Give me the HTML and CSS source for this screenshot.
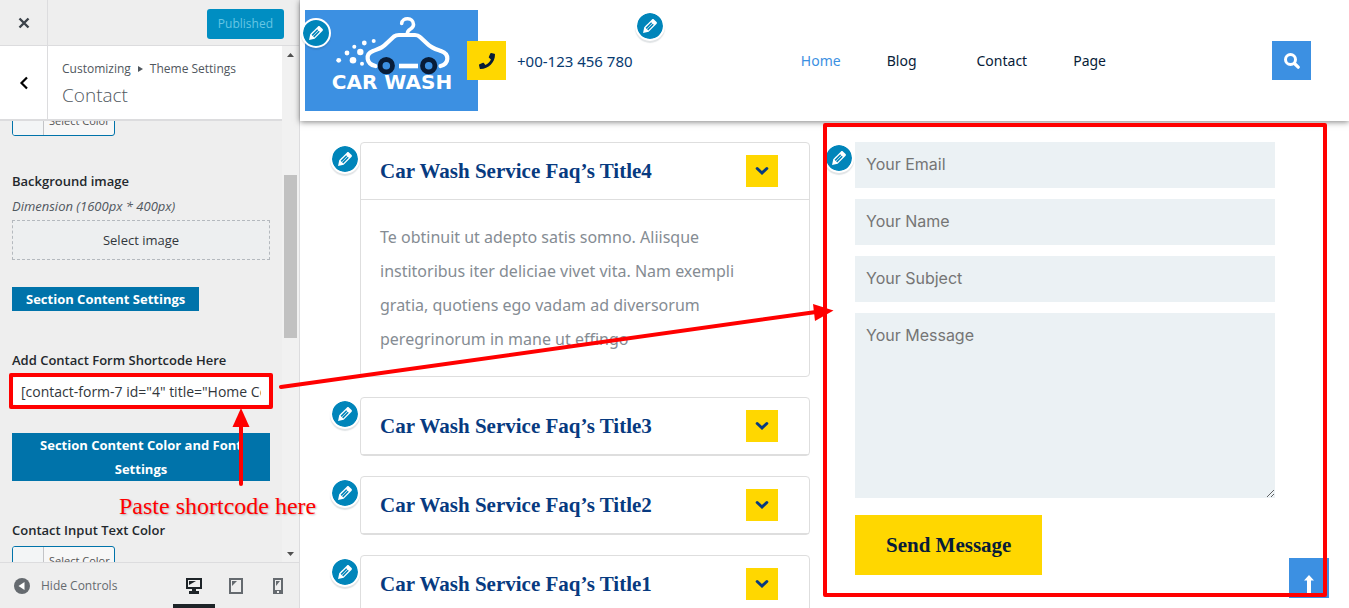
FILE: index.html
```html
<!DOCTYPE html>
<html lang="en">
<head>
<meta charset="utf-8">
<meta name="viewport" content="width=device-width, initial-scale=1">
<title>Customizing Theme Settings - Contact</title>
<link rel="stylesheet" href="styles.css">
</head>
<body>
<svg class="sprite" aria-hidden="true">
  <symbol id="pencil" viewBox="0 0 20 20"><path d="M13.89 3.39l2.71 2.72c.46.46.42 1.24.03 1.64l-8.01 8.02-5.56 1.16 1.16-5.58s7.6-7.63 7.99-8.03c.39-.39 1.22-.39 1.68.07zm-2.73 2.79l-5.59 5.61 1.11 1.11 5.54-5.65zm-2.97 8.23l5.58-5.6-1.07-1.08-5.59 5.6z" fill="#fff"/></symbol>
  <symbol id="chevron" viewBox="0 0 14 10"><path d="M2.200 2.500l4.800 4.500 4.800-4.500" fill="none" stroke="#073a80" stroke-width="3" stroke-linecap="round" stroke-linejoin="miter"/></symbol>
</svg>
<div class="app">
  <aside class="sidebar">
    <header class="topbar">
      <button class="close" aria-label="Close"><svg width="12" height="12" viewBox="0 0 12 12"><path d="M1.500 1.500l9 9M10.500 1.500l-9 9" stroke="#3c434a" stroke-width="2.400"/></svg></button>
      <button class="publish">Published</button>
    </header>
    <div class="panel">
      <div class="panel-content">
        <div class="section-title">
          <button class="back" aria-label="Back"><svg width="10" height="14" viewBox="0 0 10 14"><path d="M8 1.500L2.500 7 8 12.500" fill="none" stroke="#000" stroke-width="2.200"/></svg></button>
          <div class="crumbs">
            <div class="trail">Customizing <svg width="5" height="6" viewBox="0 0 5 6"><path d="M0 0l5 3-5 3z" fill="#50575e"/></svg> Theme Settings</div>
            <h3>Contact</h3>
          </div>
        </div>
        <div class="controls">
          <button class="color-button"><span class="swatch"></span><span class="color-label">Select Color</span></button>
          <section class="control image-control">
            <h4>Background image</h4>
            <p class="hint">Dimension (1600px * 400px)</p>
            <button class="select-image">Select image</button>
          </section>
          <div class="group-label compact">Section Content Settings</div>
          <section class="control shortcode-control">
            <label for="shortcode">Add Contact Form Shortcode Here</label>
            <div class="shortcode-frame"><input id="shortcode" type="text" value="[contact-form-7 id=&quot;4&quot; title=&quot;Home Contact&quot;]"></div>
          </section>
          <div class="group-label">Section Content Color and Font Settings</div>
          <section class="control color-control">
            <h4>Contact Input Text Color</h4>
            <button class="color-button"><span class="swatch"></span><span class="color-label">Select Color</span></button>
          </section>
        </div>
      </div>
      <div class="scrollbar" aria-hidden="true">
        <span class="arrow"><svg width="7" height="4" viewBox="0 0 7 4"><path d="M0 4l3.500-4L7 4z" fill="#505050"/></svg></span>
        <span class="track"><span class="thumb"></span></span>
        <span class="arrow"><svg width="7" height="4" viewBox="0 0 7 4"><path d="M0 0l3.500 4L7 0z" fill="#505050"/></svg></span>
      </div>
    </div>
    <footer class="bottombar">
      <button class="collapse"><svg width="16" height="16" viewBox="0 0 16 16"><circle cx="8" cy="8" r="8" fill="#656a6f"/><path d="M10.500 4v8L4.500 8z" fill="#fff"/></svg>Hide Controls</button>
      <div class="devices">
        <button class="device active" aria-label="Desktop"><svg width="16" height="16" viewBox="0 0 16 16"><path fill-rule="evenodd" d="M0 0h16v11h-6v2h3v3H3v-3h3v-2H0zM2 2v7h12V2z" fill="#1d2327"/><path d="M3 3h7L3 7z" fill="#1d2327"/></svg></button>
        <button class="device" aria-label="Tablet"><svg width="16" height="16" viewBox="0 0 16 16"><path fill-rule="evenodd" d="M1 0h14v16H1zM3 2v12h10V2z" fill="#656a6f"/><path d="M4 3h5L4 8z" fill="#656a6f"/></svg></button>
        <button class="device" aria-label="Mobile"><svg width="16" height="16" viewBox="0 0 16 16"><path fill-rule="evenodd" d="M3 0h10v16H3zM5 2v10h6V2zM7 13v2h2v-2z" fill="#656a6f"/><path d="M6 3h4L6 8z" fill="#656a6f"/></svg></button>
      </div>
    </footer>
  </aside>

  <main class="preview">
    <header class="site-header">
      <div class="logo-wrap">
        <svg class="logo" width="173" height="101" viewBox="0 0 173 101" role="img" aria-label="Car Wash">
          <rect width="173" height="101" fill="#3c90e2"/>
          <g fill="none" stroke="#fff" stroke-width="4.200" stroke-linecap="round" stroke-linejoin="round">
            <path d="M96.700 13.500C97 7 108.500 7 108.500 14.500C108.500 20 102.300 18 102.300 24" stroke-width="3.600"/>
            <path d="M70.500 56C61 54 60 44 68 41C76 38 77 38 82 33L89 26.500Q91 25 94 25H110Q113 25 115 27L122 33.500C127 38.500 130 39 136 41C145 44 144 54 135.500 56"/>
            <path d="M94 56h19" stroke-linecap="butt" stroke-width="4.600"/>
          </g>
          <g fill="none" stroke="#081c38" stroke-width="4.800"><circle cx="81.300" cy="55.700" r="6.200"/><circle cx="123.700" cy="55.700" r="6.200"/></g>
          <g fill="#fff"><circle cx="68.700" cy="31" r="2"/><circle cx="59.300" cy="33" r="2.400"/><circle cx="49.300" cy="36.700" r="2"/><circle cx="55.300" cy="42" r="3.200"/><circle cx="42" cy="43" r="2.400"/><circle cx="48" cy="50.300" r="3.300"/><circle cx="33.700" cy="50.300" r="2.400"/><circle cx="57" cy="53.700" r="2"/></g>
          <text class="logo-text" x="87" y="79" text-anchor="middle">CAR WASH</text>
        </svg>
        <button class="edit edit-logo" aria-label="Edit logo"><svg><use href="#pencil"/></svg></button>
      </div>
      <div class="phone">
        <span class="phone-icon"><svg width="16" height="16" viewBox="0 0 512 512"><path d="M493.400 24.600l-104-24c-11.300-2.600-22.900 3.300-27.500 13.900l-48 112c-4.200 9.800-1.400 21.300 6.900 28l60.600 49.600c-36 76.700-98.900 140.500-177.200 177.200l-49.600-60.600c-6.800-8.300-18.200-11.100-28-6.900l-112 48C3.900 366.500-2 378.100.6 389.400l24 104C27.100 504.200 36.700 512 48 512c256.100 0 464-207.500 464-464 0-11.200-7.700-20.900-18.600-23.400z" fill="#081c38"/></svg></span>
        <span>+00-123 456 780</span>
        <button class="edit edit-phone" aria-label="Edit phone"><svg><use href="#pencil"/></svg></button>
      </div>
      <nav class="menu">
        <a class="current" href="#">Home</a><a class="blog" href="#">Blog</a><a href="#">Contact</a><a href="#">Page</a>
      </nav>
      <button class="search" aria-label="Search"><svg width="16" height="16" viewBox="0 0 16 16"><circle cx="6.500" cy="6.500" r="5" fill="none" stroke="#fff" stroke-width="3"/><path d="M10.500 10.500l3.700 3.700" stroke="#fff" stroke-width="3.200" stroke-linecap="round"/></svg></button>
    </header>

    <div class="contact-section">
      <div class="faqs">
        <article class="faq">
          <button class="edit edit-faq" aria-label="Edit FAQ 4"><svg><use href="#pencil"/></svg></button>
          <button class="faq-head open">Car Wash Service Faq’s Title4<span class="toggle"><svg width="14" height="10"><use href="#chevron"/></svg></span></button>
          <p class="faq-body">Te obtinuit ut adepto satis somno. Aliisque institoribus iter deliciae vivet vita. Nam exempli gratia, quotiens ego vadam ad diversorum peregrinorum in mane ut effingo</p>
        </article>
        <article class="faq">
          <button class="edit edit-faq" aria-label="Edit FAQ 3"><svg><use href="#pencil"/></svg></button>
          <button class="faq-head">Car Wash Service Faq’s Title3<span class="toggle"><svg width="14" height="10"><use href="#chevron"/></svg></span></button>
        </article>
        <article class="faq">
          <button class="edit edit-faq" aria-label="Edit FAQ 2"><svg><use href="#pencil"/></svg></button>
          <button class="faq-head">Car Wash Service Faq’s Title2<span class="toggle"><svg width="14" height="10"><use href="#chevron"/></svg></span></button>
        </article>
        <article class="faq">
          <button class="edit edit-faq" aria-label="Edit FAQ 1"><svg><use href="#pencil"/></svg></button>
          <button class="faq-head">Car Wash Service Faq’s Title1<span class="toggle"><svg width="14" height="10"><use href="#chevron"/></svg></span></button>
        </article>
      </div>
      <form class="contact-form">
        <button type="button" class="edit edit-form" aria-label="Edit form"><svg><use href="#pencil"/></svg></button>
        <input type="email" placeholder="Your Email" aria-label="Your Email">
        <input type="text" placeholder="Your Name" aria-label="Your Name">
        <input type="text" placeholder="Your Subject" aria-label="Your Subject">
        <textarea placeholder="Your Message" aria-label="Your Message"></textarea>
        <button type="button" class="send">Send Message</button>
      </form>
    </div>
    <button class="to-top" aria-label="Back to top"><svg width="10" height="18" viewBox="0 0 10 18"><path d="M5 0l5 5.500H7V18H3V5.500H0z" fill="#fff"/></svg></button>
  </main>

  <svg class="arrows" width="1349" height="608" viewBox="0 0 1349 608" aria-hidden="true">
    <g stroke="#f00" stroke-width="4" stroke-linecap="round" fill="#f00">
      <path d="M281 387L816 312"/>
      <path d="M241 484V424"/>
      <path d="M813 304l20.500 6.500L815 321z" stroke="none"/>
      <path d="M241 408l8.500 19h-17z" stroke="none"/>
    </g>
  </svg>
  <p class="note">Paste shortcode here</p>
</div>
</body>
</html>
```
FILE: styles.css
```css
* { box-sizing: border-box; }
body { margin: 0; background: #fff; font-family: "Open Sans", "Noto Sans", sans-serif; }
h3, h4, p { margin: 0; }
button { margin: 0; padding: 0; border: 0; background: none; font: inherit; color: inherit; cursor: pointer; }
svg { display: block; flex: none; }
.sprite { position: absolute; width: 0; height: 0; }

.app { position: relative; display: grid; grid-template-columns: 300px 1fr; grid-template-rows: minmax(0, 1fr); height: 100vh; overflow: hidden; }

/* Customizer sidebar */
.sidebar { display: flex; flex-direction: column; min-height: 0; background: #eee; border-right: 1px solid #dcdcde; font-size: 13px; color: #50575e; }
.topbar { display: flex; align-items: center; justify-content: space-between; height: 46px; padding-right: 15px; border-bottom: 1px solid #dcdcde; flex: none; }
.close { display: flex; align-items: center; justify-content: center; width: 48px; height: 45px; border-right: 1px solid #dcdcde; }
.publish { height: 30px; margin-top: 2px; padding: 0 11px; border-radius: 3px; background: #008ec2; color: #66c6e4; font-size: 12px; }
.panel { display: flex; flex: 1; min-height: 0; }
.panel-content { flex: 1; min-width: 0; overflow: hidden; }
.section-title { position: relative; z-index: 1; display: flex; height: 75px; background: #fff; border-bottom: 2px solid #dcdcde; }
.back { display: flex; align-items: center; justify-content: center; width: 48px; border-right: 1px solid #dcdcde; }
.crumbs { padding: 13px 14px; }
.trail { display: flex; align-items: center; gap: 7px; line-height: 20px; white-space: nowrap; font-size: 12px; }
.crumbs h3 { font-size: 19px; line-height: 32px; font-weight: 300; color: #50575e; }
.controls { display: flex; flex-direction: column; align-items: flex-start; padding: 0 12px; margin-top: -15px; }
.color-button { display: flex; height: 30px; border: 1px solid #0073aa; border-radius: 3px; background: #f7f7f7; overflow: hidden; font-size: 11px; color: #555; }
.swatch { width: 31px; background: #f3f5f6; border-right: 1px solid #c3c4c7; }
.color-label { padding: 0 4px 0 5px; line-height: 28px; }
.control { width: 100%; }
.control h4, .control label { display: block; font-size: 13px; line-height: 20px; font-weight: 600; color: #23282d; }
.image-control { margin-top: 35px; }
.hint { margin-top: 6px; font-size: 13px; line-height: 18px; font-style: italic; }
.select-image { display: block; width: 100%; height: 40px; margin-top: 5px; border: 1px dashed #b4b9be; background: #edeff0; font-size: 13px; color: #32373c; }
.group-label { width: 100%; padding: 0 20px; background: #0073aa; color: #fff; font-size: 13px; line-height: 24px; font-weight: 700; text-align: center; }
.compact { width: auto; margin-top: 27px; padding: 0 14px; white-space: nowrap; }
.shortcode-control { margin: 39px 0 24px; }
.shortcode-frame { margin: 3px -3px 0; border: 4px solid #f00; border-radius: 2px; }
.shortcode-frame input { display: block; width: 100%; height: 28px; border: 0; padding: 0 8px; border-radius: 4px; background: #fff; font: 14px "Open Sans", sans-serif; color: #32373c; }
.color-control { margin-top: 39px; }
.color-control .color-button { margin-top: 6px; }
.scrollbar { display: flex; flex-direction: column; width: 17px; background: #f1f1f1; }
.arrow { display: flex; align-items: center; justify-content: center; height: 17px; }
.track { flex: 1; padding: 112px 2px 0; }
.thumb { display: block; height: 163px; background: #c1c1c1; }
.bottombar { display: flex; align-items: stretch; justify-content: space-between; height: 46px; padding-left: 14px; border-top: 1px solid #dcdcde; flex: none; }
.collapse { display: flex; align-items: center; gap: 11px; font-size: 12px; color: #656a6f; }
.devices { display: flex; }
.device { display: flex; align-items: center; justify-content: center; width: 42px; border-bottom: 4px solid transparent; padding-top: 4px; }
.active { border-bottom-color: #1d2327; }

/* Site preview */
.preview { position: relative; min-width: 0; background: #fff; }
.site-header { display: flex; align-items: center; height: 121px; padding: 0 38px 0 5px; box-shadow: 0 1px 6px rgba(0, 0, 0, .5); font-family: "Noto Sans", sans-serif; }
.logo-wrap { position: relative; }
.logo-text { font: 700 20px "DejaVu Sans", sans-serif; fill: #fff; }
.edit { position: absolute; display: flex; align-items: center; justify-content: center; width: 30px; height: 30px; border: 2px solid #fff; border-radius: 50%; background: #0085ba; background-clip: padding-box; box-shadow: 0 2px 1px rgba(46, 68, 83, .15); }
.edit svg { width: 20px; height: 20px; }
.edit-logo { left: -4px; top: 8px; }
.phone { position: relative; display: flex; align-items: center; gap: 11px; margin-left: -11px; font-size: 15px; color: #073a70; white-space: nowrap; }
.phone-icon { display: flex; align-items: center; justify-content: center; width: 39px; height: 39px; background: #ffd700; }
.edit-phone { right: -32px; bottom: 39px; }
.menu { display: flex; gap: 46px; margin-left: auto; margin-right: 166px; font-size: 14px; }
.menu a { color: #081c38; text-decoration: none; }
.menu .current { color: #3c90e2; }
.menu .blog { padding-right: 14px; }
.search { display: flex; align-items: center; justify-content: center; width: 39px; height: 39px; background: #3c90e2; }
.contact-section { display: grid; grid-template-columns: 450fr 420fr; gap: 45px; align-items: start; padding: 21px 74px 0 60px; }
.faqs { display: flex; flex-direction: column; gap: 20px; }
.faq { position: relative; border: 1px solid #dedede; border-radius: 4px; }
.edit-faq { left: -31px; top: 1px; }
.faq-head { display: flex; align-items: center; justify-content: space-between; width: 100%; height: 57px; padding: 0 31px 0 19px; border-bottom: 1px solid #dedede; font: 700 21px "Liberation Serif", serif; color: #073a80; text-align: left; }
.toggle { display: flex; align-items: center; justify-content: center; width: 32px; height: 32px; background: #ffd700; }
.faq-body { padding: 20px 60px 20px 19px; font-family: "Noto Sans", sans-serif; font-size: 16px; line-height: 34px; color: #858c93; }
.contact-form { position: relative; display: flex; flex-direction: column; gap: 11px; }
.contact-form::after { content: ""; position: absolute; z-index: 3; inset: -19px -52px -22px -32px; border: 4px solid #f00; border-radius: 2px; pointer-events: none; }
.edit-form { left: -31px; top: 1px; }
.contact-form input, .contact-form textarea { display: block; width: 100%; height: 46px; padding: 0 11px 2px; border: 0; border-radius: 0; background: #ebf1f4; font: 16px "Inter", sans-serif; color: #333; }
.contact-form textarea { height: 185px; padding-top: 12px; resize: vertical; }
.contact-form ::placeholder { color: #757575; opacity: 1; }
.send { align-self: flex-start; height: 60px; margin-top: 6px; padding: 0 31px; background: #ffd700; color: #081c38; font: 700 21px "Liberation Serif", serif; }
.to-top { position: absolute; z-index: 1; right: 20px; bottom: 10px; display: flex; align-items: flex-end; justify-content: center; width: 40px; height: 40px; padding-bottom: 5px; background: #3c90e2; }

/* Annotations laid over the screen */
.arrows { position: absolute; left: 0; top: 0; z-index: 5; pointer-events: none; }
.note { position: absolute; left: 119px; top: 492px; z-index: 5; font: 24px/28px "Liberation Serif", serif; color: #f00; text-shadow: 1px 1px 2px rgba(0, 0, 0, .25); white-space: nowrap; }
```
